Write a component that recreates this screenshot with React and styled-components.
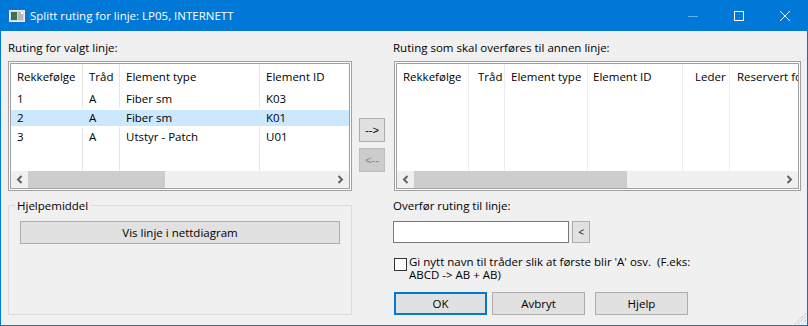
import React from 'react'
import styled, { createGlobalStyle } from 'styled-components'

const GlobalStyle = createGlobalStyle`
  html, body { margin: 0; padding: 0; background: #f0f0f0; }
  body {
    font-family: 'Open Sans', 'Noto Sans', 'Liberation Sans', sans-serif;
    font-size: 11.5px;
    color: #000;
  }
  * { box-sizing: border-box; }
`

const Window = styled.div`
  position: relative;
  width: 808px;
  height: 326px;
  display: flex;
  flex-direction: column;
  background: #f0f0f0;
  overflow: hidden;
`

const TitleBar = styled.div`
  height: 31px;
  flex-shrink: 0;
  display: flex;
  align-items: center;
  padding-left: 9px;
  background: #0078d7;
  color: #fff;
`

const Title = styled.div`
  flex: 1;
  margin-left: 5px;
  line-height: 15px;
  white-space: nowrap;
`

const CaptionButton = styled.div`
  width: 46px;
  height: 31px;
  display: flex;
  align-items: center;
  justify-content: center;
`

const Body = styled.div`
  flex: 1;
  display: grid;
  grid-template-columns: 344px 41px 1fr;
  align-content: start;
  padding: 9px 6px 0 7px;
  border: 1px solid #0078d7;
  border-top: none;
`

const Panel = styled.div`
  display: flex;
  flex-direction: column;
  min-width: 0;
`

const Label = styled.div`
  line-height: 15px;
  margin-bottom: ${({ $gap }) => $gap || 0}px;
  white-space: nowrap;
`

const ListFrame = styled.div`
  height: 130px;
  margin-left: ${({ $offset }) => $offset || 0}px;
  padding: 1px;
  border: 1px solid #a0a0a0;
  background: #fff;
`

const Viewport = styled.div`
  height: 100%;
  display: flex;
  flex-direction: column;
  border: 1px solid #a0a0a0;
  overflow: hidden;
`

const Table = styled.div`
  flex: 1;
  min-height: 0;
  display: flex;
  flex-direction: column;
  overflow: hidden;
`

const Row = styled.div`
  display: flex;
  flex-shrink: 0;
  height: ${({ $h }) => $h}px;
  background: ${({ $selected }) =>
    $selected
      ? 'linear-gradient(transparent 2px, #cce8ff 2px, #cce8ff 18px, transparent 18px)'
      : 'transparent'};
`

const Filler = styled.div`
  flex: 1;
  display: flex;
`

const Cell = styled.div`
  flex-shrink: 0;
  display: flex;
  align-items: center;
  width: ${({ $w }) => $w}px;
  padding-left: ${({ $pad }) => $pad}px;
  border-right: 1px solid ${({ $line }) => $line};
  white-space: nowrap;
  overflow: hidden;
  line-height: 15px;
`

const ScrollBar = styled.div`
  height: 17px;
  flex-shrink: 0;
  display: flex;
  background: #f0f0f0;
`

const ScrollArrow = styled.div`
  width: 17px;
  flex-shrink: 0;
  display: flex;
  align-items: center;
  justify-content: center;
`

const Track = styled.div`
  flex: 1;
  display: flex;
`

const Thumb = styled.div`
  height: 100%;
  background: #cdcdcd;
`

const MoveColumn = styled.div`
  display: flex;
  flex-direction: column;
  gap: 6px;
  padding: 78px 0 0 7px;
`

const MoveButton = styled.div`
  width: 26px;
  height: 24px;
  display: flex;
  align-items: center;
  justify-content: center;
  font-family: 'Liberation Sans', sans-serif;
  font-size: 11px;
  border: 1px solid ${({ $disabled }) => ($disabled ? '#bfbfbf' : '#adadad')};
  background: ${({ $disabled }) => ($disabled ? '#cccccc' : '#e1e1e1')};
  color: ${({ $disabled }) => ($disabled ? '#838383' : '#000')};
`

const GroupBox = styled.fieldset`
  grid-column: 1;
  margin: 7px 0 0;
  padding: 8px 11px 15px;
  min-width: 0;
  border: 1px solid #dcdcdc;
`

const Legend = styled.legend`
  margin-left: -5px;
  padding: 0 2px;
  line-height: 15px;
`

const PushButton = styled.button`
  width: ${({ $w }) => ($w ? `${$w}px` : '100%')};
  height: ${({ $h }) => $h || 23}px;
  margin: 0 0 0 ${({ $ml }) => $ml || 0}px;
  padding: 0;
  display: flex;
  align-items: center;
  justify-content: center;
  font: inherit;
  color: #000;
  background: #e1e1e1;
  border: ${({ $primary }) => ($primary ? '2px solid #0078d7' : '1px solid #adadad')};
  border-radius: 0;
`

const TransferForm = styled.div`
  grid-column: 3;
  margin-top: 7px;
  display: flex;
  flex-direction: column;
`

const FieldRow = styled.div`
  display: flex;
  gap: 3px;
`

const TextBox = styled.div`
  width: 176px;
  height: 22px;
  border: 1px solid #7a7a7a;
  background: #fff;
`

const PickButton = styled.div`
  width: 18px;
  height: 22px;
  display: flex;
  align-items: center;
  justify-content: center;
  font-size: 10px;
  border: 1px solid #adadad;
  background: #e1e1e1;
`

const CheckRow = styled.div`
  display: flex;
  align-items: flex-start;
  margin-top: 12px;
`

const CheckBox = styled.div`
  width: 13px;
  height: 13px;
  flex-shrink: 0;
  margin: 3px 2px 0 1px;
  border: 1px solid #333;
  background: #fff;
`

const CheckText = styled.div`
  line-height: 13px;
`

const ButtonRow = styled.div`
  display: flex;
  margin-top: 11px;
  padding-left: 1px;
`

const Grip = styled.svg`
  position: absolute;
  right: 1px;
  bottom: 1px;
`

const leftCols = [
  { w: 72, pad: 6 },
  { w: 37, pad: 6 },
  { w: 140, pad: 6 },
  { w: 100, pad: 6 },
]

const rightCols = [
  { w: 72, pad: 6 },
  { w: 36, pad: 9 },
  { w: 83, pad: 6 },
  { w: 95, pad: 5 },
  { w: 47, pad: 12 },
  { w: 110, pad: 7 },
]

const headers = ['Rekkefølge', 'Tråd', 'Element type', 'Element ID', 'Leder', 'Reservert for']

const routing = [
  ['1', 'A', 'Fiber sm', 'K03'],
  ['2', 'A', 'Fiber sm', 'K01'],
  ['3', 'A', 'Utstyr - Patch', 'U01'],
]

function Chevron({ dir }) {
  const d = dir === 'left' ? 'M10.5 5 L7 8.5 L10.5 12' : 'M6.5 5 L10 8.5 L6.5 12'
  return (
    <svg width="17" height="17" viewBox="0 0 17 17">
      <path d={d} fill="none" stroke="#606060" strokeWidth="2" />
    </svg>
  )
}

function ListView({ cols, rows, selected, thumb, line, offset }) {
  return (
    <ListFrame $offset={offset}>
      <Viewport>
        <Table>
          <Row $h={25}>
            {cols.map((c, i) => (
              <Cell key={i} $w={c.w} $pad={c.pad} $line={line}>{headers[i]}</Cell>
            ))}
          </Row>
          {rows.map((r, ri) => (
            <Row key={ri} $h={19} $selected={ri === selected}>
              {cols.map((c, i) => (
                <Cell key={i} $w={c.w} $pad={c.pad} $line={ri === selected ? 'transparent' : line}>
                  {r[i]}
                </Cell>
              ))}
            </Row>
          ))}
          <Filler>
            {cols.map((c, i) => (
              <Cell key={i} $w={c.w} $pad={c.pad} $line={line} />
            ))}
          </Filler>
        </Table>
        <ScrollBar>
          <ScrollArrow><Chevron dir="left" /></ScrollArrow>
          <Track>
            <Thumb style={{ width: thumb }} />
          </Track>
          <ScrollArrow><Chevron dir="right" /></ScrollArrow>
        </ScrollBar>
      </Viewport>
    </ListFrame>
  )
}

export default function App() {
  return (
    <>
      <GlobalStyle />
      <Window>
        <TitleBar>
          <svg width="16" height="12" viewBox="0 0 16 12">
            <rect x="0.5" y="0.5" width="15" height="11" fill="#d8d8d8" stroke="#eeeeee" />
            <rect x="2" y="2" width="6" height="8" fill="#3f6f5c" />
            <rect x="9" y="2" width="5" height="8" fill="#b9b9b9" />
            <rect x="12" y="2" width="2" height="2" fill="#ffffff" />
          </svg>
          <Title>Splitt ruting for linje: LP05, INTERNETT</Title>
          <CaptionButton>
            <svg width="10" height="10" viewBox="0 0 10 10">
              <path d="M0 5.5 H10" stroke="rgba(255,255,255,0.4)" strokeWidth="1" />
            </svg>
          </CaptionButton>
          <CaptionButton>
            <svg width="10" height="10" viewBox="0 0 10 10">
              <rect x="0.5" y="0.5" width="9" height="9" fill="none" stroke="#fff" />
            </svg>
          </CaptionButton>
          <CaptionButton>
            <svg width="10" height="10" viewBox="0 0 10 10">
              <path d="M0 0 L10 10 M10 0 L0 10" stroke="#fff" strokeWidth="1" />
            </svg>
          </CaptionButton>
        </TitleBar>

        <Body>
          <Panel>
            <Label $gap={6}>Ruting for valgt linje:</Label>
            <ListView cols={leftCols} rows={routing} selected={1} thumb={137} line="#e5e5e5" />
          </Panel>

          <MoveColumn>
            <MoveButton>--&gt;</MoveButton>
            <MoveButton $disabled>&lt;--</MoveButton>
          </MoveColumn>

          <Panel>
            <Label $gap={6}>Ruting som skal overføres til annen linje:</Label>
            <ListView cols={rightCols} rows={[]} thumb={213} line="#e8edf5" offset={1} />
          </Panel>

          <GroupBox>
            <Legend>Hjelpemiddel</Legend>
            <PushButton>Vis linje i nettdiagram</PushButton>
          </GroupBox>

          <TransferForm>
            <Label $gap={8}>Overfør ruting til linje:</Label>
            <FieldRow>
              <TextBox />
              <PickButton>&lt;</PickButton>
            </FieldRow>
            <CheckRow>
              <CheckBox />
              <CheckText>
                Gi nytt navn til tråder slik at første blir 'A' osv.&nbsp; (F.eks:
                <br />
                ABCD -&gt; AB + AB)
              </CheckText>
            </CheckRow>
            <ButtonRow>
              <PushButton $w={93} $primary>OK</PushButton>
              <PushButton $w={93} $ml={5}>Avbryt</PushButton>
              <PushButton $w={93} $ml={10}>Hjelp</PushButton>
            </ButtonRow>
          </TransferForm>
        </Body>

        <Grip width="12" height="12" viewBox="0 0 12 12">
          <path d="M11 3 L3 11 M11 7 L7 11 M11 0 L0 11" stroke="#b0b0b0" strokeWidth="1" strokeDasharray="1 1" />
        </Grip>
      </Window>
    </>
  )
}
